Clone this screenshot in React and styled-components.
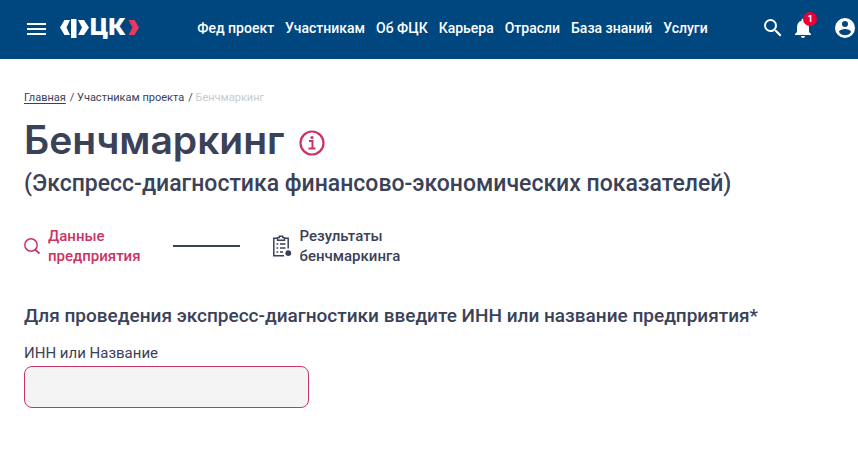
import React, { useState } from "react";
import styled, { createGlobalStyle } from "styled-components";

const GlobalStyle = createGlobalStyle`
  * {
    box-sizing: border-box;
  }
  body {
    margin: 0;
    background: #fff;
    color: #3b4158;
    font-family: Roboto, "Noto Sans", sans-serif;
  }
`;

const Header = styled.header`
  display: flex;
  align-items: center;
  justify-content: space-between;
  height: 59px;
  padding: 0 1px 3px 24px;
  background: #00467f;
`;
const HeaderGroup = styled.div`
  display: flex;
  align-items: center;
  gap: ${(props) => props.$gap};
`;
const IconButton = styled.button`
  position: relative;
  display: flex;
  margin: 0;
  padding: 0;
  border: none;
  background: none;
  color: #fff;
  cursor: pointer;
`;
const LogoLink = styled.a`
  display: flex;
`;
const LogoText = styled.text`
  fill: #fff;
  font-family: Inter, sans-serif;
  font-size: 23px;
  font-weight: 900;
`;
const Badge = styled.span`
  position: absolute;
  top: -4px;
  right: -2px;
  width: 14px;
  height: 14px;
  border-radius: 50%;
  background: #ec0033;
  font-family: Inter, sans-serif;
  font-size: 9px;
  font-weight: 700;
  line-height: 14px;
  text-align: center;
`;
const Nav = styled.nav`
  display: flex;
  gap: 11px;
  padding-left: 4px;
`;
const NavLink = styled.a`
  color: #fff;
  font-size: 14px;
  font-weight: 500;
  line-height: 20px;
  text-decoration: none;
  white-space: nowrap;
`;

const Main = styled.main`
  padding: 31px 24px;
`;
const Breadcrumbs = styled.nav`
  display: flex;
  gap: 4px;
  font-size: 11px;
  line-height: 16px;
`;
const Crumb = styled.a`
  color: inherit;
  text-decoration: ${(props) => (props.$root ? "underline" : "none")};
  text-underline-offset: 2px;
`;
const CurrentCrumb = styled.span`
  color: #c9cad0;
`;
const TitleRow = styled.div`
  display: flex;
  align-items: center;
  gap: 14px;
  margin-top: 9px;
`;
const Title = styled.h1`
  margin: 0;
  font-family: Inter, sans-serif;
  font-size: 39px;
  font-weight: 600;
  line-height: 50px;
`;
const InfoButton = styled(IconButton)`
  margin-top: 6px;
  color: #cb3365;
`;
const Subtitle = styled.p`
  margin: 5px 0 0;
  font-size: 23px;
  font-weight: 500;
  line-height: 28px;
`;
const Steps = styled.ol`
  display: flex;
  align-items: center;
  margin: 28px 0 0;
  padding: 0;
  list-style: none;
`;
const Step = styled.li`
  display: flex;
  align-items: center;
  gap: 8px;
  color: ${(props) => (props.$active ? "#cb3365" : "inherit")};
  font-size: 15px;
  font-weight: 500;
  line-height: 20px;
`;
const StepLine = styled.li`
  width: 67px;
  height: 2px;
  margin: 0 32px;
  background: #3b4158;
`;
const Form = styled.form`
  margin-top: 36px;
`;
const FormTitle = styled.h2`
  margin: 0;
  font-size: 19px;
  font-weight: 500;
  line-height: 28px;
`;
const Label = styled.label`
  display: block;
  margin-top: 11px;
  font-size: 15px;
  line-height: 24px;
`;
const TextInput = styled.input`
  display: block;
  width: 285px;
  max-width: 100%;
  height: 42px;
  margin-top: 1px;
  padding: 0 12px;
  border: 1px solid #cb3365;
  border-radius: 8px;
  background: #f4f4f4;
  color: inherit;
  font: inherit;
  outline: none;
`;

const navItems = [
  "Фед проект",
  "Участникам",
  "Об ФЦК",
  "Карьера",
  "Отрасли",
  "База знаний",
  "Услуги",
];

const MenuIcon = () => (
  <svg width="24" height="24" viewBox="0 0 24 24" fill="currentColor">
    <path d="M3 7h19v2H3zM3 12h19v2H3zM3 17h19v2H3z" />
  </svg>
);

const Logo = () => (
  <svg width="80" height="30" viewBox="0 -6 80 30" fill="#fff">
    <path d="M4.5 1H10L6.5 8.5 10 16H4.5L0 8.5z" />
    <path d="M11 0h5.5v19H11z" />
    <path d="M18 1h6l5 7.5-5 7.5h-6l4-7.5z" />
    <LogoText x="30" y="16">
      ЦК
    </LogoText>
    <path d="M68.5 1h6L79 8.5 74.5 16h-6l4-7.5z" fill="#e8395f" />
  </svg>
);

const SearchIcon = () => (
  <svg width="24" height="24" viewBox="0 0 24 24" fill="currentColor">
    <path d="M15.5 14h-.79l-.28-.27A6.47 6.47 0 0 0 16 9.5 6.5 6.5 0 1 0 9.5 16c1.61 0 3.09-.59 4.23-1.57l.27.28v.79l5 4.99L20.49 19l-4.99-5zm-6 0a4.5 4.5 0 1 1 0-9 4.5 4.5 0 0 1 0 9z" />
  </svg>
);

const BellIcon = () => (
  <svg width="24" height="24" viewBox="0 0 24 24" fill="currentColor">
    <path d="M12 22c1.1 0 2-.9 2-2h-4a2 2 0 0 0 2 2zm6-6v-5c0-3.07-1.64-5.64-4.5-6.32V4a1.5 1.5 0 0 0-3 0v.68C7.63 5.36 6 7.92 6 11v5l-2 2v1h16v-1l-2-2z" />
  </svg>
);

const AccountIcon = () => (
  <svg width="24" height="24" viewBox="0 0 24 24" fill="currentColor">
    <path d="M12 2a10 10 0 1 0 0 20 10 10 0 0 0 0-20zm0 3a3 3 0 1 1 0 6 3 3 0 0 1 0-6zm0 14.2a7.2 7.2 0 0 1-6-3.22c.03-1.99 4-3.08 6-3.08s5.97 1.09 6 3.08a7.2 7.2 0 0 1-6 3.22z" />
  </svg>
);

const InfoIcon = () => (
  <svg width="26" height="26" viewBox="0 0 26 26" fill="none" stroke="currentColor">
    <circle cx="13" cy="13" r="11.5" strokeWidth="2.2" />
    <path d="M10 11h3.5v7.5M9.5 18.5h7" strokeWidth="2" />
    <circle cx="13" cy="7.5" r="1.6" fill="currentColor" stroke="none" />
  </svg>
);

const StepSearchIcon = () => (
  <svg width="16" height="18" viewBox="0 0 16 18" fill="none" stroke="currentColor">
    <circle cx="7" cy="8" r="6.2" strokeWidth="1.5" />
    <path d="M11 12.5l4.5 4" strokeWidth="1.7" />
  </svg>
);

const ClipboardIcon = () => (
  <svg width="20" height="22" viewBox="0 0 20 22" fill="none" stroke="currentColor">
    <path d="M5 3.2H1.8v17.6H12M12.5 3.2h3.7v10.3" strokeWidth="1.5" />
    <path d="M5.5 5.2V2.6h1.8V1.3h3.4v1.3h1.8v2.6z" strokeWidth="1.4" />
    <path
      d="M4.5 9h1.7M8 9h5.5M4.5 13h1.7M8 13h5.5M4.5 17h1.7M8 17h3"
      strokeWidth="1.4"
    />
    <circle cx="16.3" cy="18.2" r="2.9" fill="currentColor" stroke="none" />
  </svg>
);

const App = () => {
  const [company, setCompany] = useState("");

  const handleSubmit = (e) => {
    e.preventDefault();
  };

  return (
    <>
      <GlobalStyle />
      <Header>
        <HeaderGroup $gap="12px">
          <IconButton type="button" aria-label="Меню">
            <MenuIcon />
          </IconButton>
          <LogoLink href="#" aria-label="ФЦК">
            <Logo />
          </LogoLink>
        </HeaderGroup>
        <Nav>
          {navItems.map((item) => (
            <NavLink key={item} href="#">
              {item}
            </NavLink>
          ))}
        </Nav>
        <HeaderGroup $gap="18px">
          <HeaderGroup $gap="6px">
            <IconButton type="button" aria-label="Поиск">
              <SearchIcon />
            </IconButton>
            <IconButton type="button" aria-label="Уведомления">
              <BellIcon />
              <Badge>1</Badge>
            </IconButton>
          </HeaderGroup>
          <IconButton type="button" aria-label="Профиль">
            <AccountIcon />
          </IconButton>
        </HeaderGroup>
      </Header>
      <Main>
        <Breadcrumbs>
          <Crumb href="#" $root>
            Главная
          </Crumb>
          <span>
            / <Crumb href="#">Участникам проекта</Crumb>
          </span>
          <span>
            / <CurrentCrumb>Бенчмаркинг</CurrentCrumb>
          </span>
        </Breadcrumbs>
        <TitleRow>
          <Title>Бенчмаркинг</Title>
          <InfoButton type="button" aria-label="Информация">
            <InfoIcon />
          </InfoButton>
        </TitleRow>
        <Subtitle>
          (Экспресс-диагностика финансово-экономических показателей)
        </Subtitle>
        <Steps>
          <Step $active>
            <StepSearchIcon />
            <span>
              Данные
              <br />
              предприятия
            </span>
          </Step>
          <StepLine aria-hidden="true" />
          <Step>
            <ClipboardIcon />
            <span>
              Результаты
              <br />
              бенчмаркинга
            </span>
          </Step>
        </Steps>
        <Form onSubmit={handleSubmit}>
          <FormTitle>
            Для проведения экспресс-диагностики введите ИНН или название
            предприятия*
          </FormTitle>
          <Label htmlFor="company">ИНН или Название</Label>
          <TextInput
            id="company"
            type="text"
            value={company}
            onChange={(e) => setCompany(e.target.value)}
          />
        </Form>
      </Main>
    </>
  );
};

export default App;
